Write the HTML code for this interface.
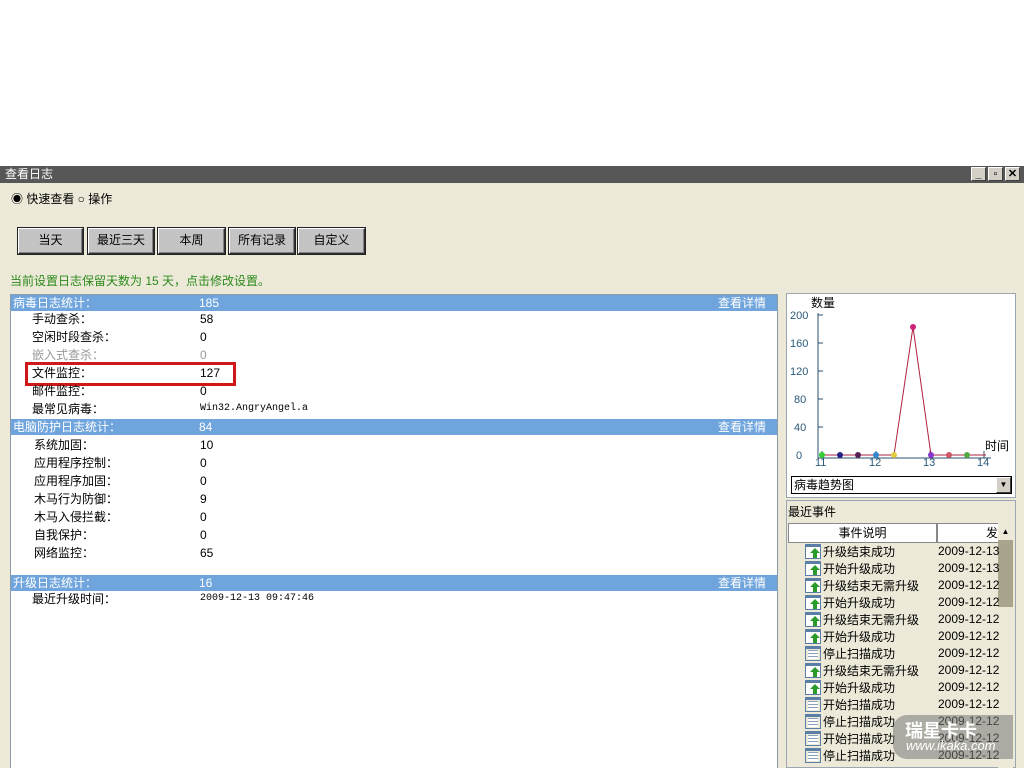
<!DOCTYPE html>
<html><head><meta charset="utf-8"><style>
*{margin:0;padding:0;box-sizing:border-box}
body{width:1024px;height:768px;overflow:hidden;background:#fff;font-family:"Liberation Sans","Noto Sans CJK SC",sans-serif;font-size:12px;position:relative;color:#000}
.a{position:absolute;white-space:nowrap}
.win{position:absolute;left:0;top:166px;width:1024px;height:602px;background:#ece9d8;overflow:hidden}
.title{position:absolute;left:0;top:0;width:1024px;height:17px;background:#575757;color:#fff;font-size:12px;line-height:17px;padding-left:5px}
.tb{position:absolute;top:1px;width:15px;height:14px;background:#d4d0c8;border:1px solid #fff;border-right-color:#404040;border-bottom-color:#404040;font-size:11px;font-weight:bold;line-height:12px;text-align:center;color:#000}
.btn{position:absolute;top:62px;height:26px;background:#c4c4c4;border:1px solid;border-color:#fff #303030 #303030 #fff;box-shadow:inset -1px -1px 0 #808080;text-align:center;line-height:23px;font-size:12px;outline:1px solid #222}
.panel{position:absolute;left:10px;top:128px;width:768px;height:480px;background:#fff;border:1px solid #8a9aaa}
.hd{position:absolute;left:0;width:766px;height:16px;background:#6fa5dc;color:#fff;line-height:16px}
.r{position:absolute;line-height:18px;top:0}
.m{font-family:"Liberation Mono",monospace;font-size:10px}
.rp{position:absolute;background:#fff;border:1px solid #9aa7b0}
.ev{position:absolute;left:823px;color:#000}
.dt{position:absolute;left:938px;font-size:12px}
.ic{position:absolute;left:805px;width:16px;height:15px;border:1px solid #5a7ea6;border-top-width:3px;background:#fff}
.ic.u::after{content:"";position:absolute;left:4px;top:1px;border:5px solid transparent;border-bottom:5px solid #2a9a2a;border-top:0}
.ic.u::before{content:"";position:absolute;left:7px;top:6px;width:4px;height:5px;background:#2a9a2a}
.ic.l{background:repeating-linear-gradient(#fff 0 1px,#8aa0bb 1px 2px,#fff 2px 3px);background-clip:content-box;padding:1px 2px}
</style></head><body>
<div class="win">
<div class="title">查看日志</div>
<div class="tb" style="left:971px">_</div><div class="tb" style="left:988px">▫</div><div class="tb" style="left:1005px">✕</div>
<div class="a" style="left:11px;top:24px">◉ 快速查看 ○ 操作</div>
<div class="btn" style="left:18px;width:65px">当天</div>
<div class="btn" style="left:88px;width:66px">最近三天</div>
<div class="btn" style="left:158px;width:67px">本周</div>
<div class="btn" style="left:229px;width:66px">所有记录</div>
<div class="btn" style="left:298px;width:67px">自定义</div>
<div class="a" style="left:10px;top:106px;color:#2a8a1a">当前设置日志保留天数为 15 天，点击修改设置。</div>
<div class="panel">
 <div class="hd" style="top:0"><span class="a" style="left:2px">病毒日志统计：</span><span class="a" style="left:188px">185</span><span class="a" style="left:707px">查看详情</span></div>
 <div class="r" style="left:21px;top:15px">手动查杀：</div><div class="r" style="left:189px;top:15px">58</div>
 <div class="r" style="left:21px;top:33px">空闲时段查杀：</div><div class="r" style="left:189px;top:33px">0</div>
 <div class="r" style="left:21px;top:51px;color:#999">嵌入式查杀：</div><div class="r" style="left:189px;top:51px;color:#999">0</div>
 <div class="r" style="left:21px;top:69px">文件监控：</div><div class="r" style="left:189px;top:69px">127</div>
 <div class="a" style="left:14px;top:67px;width:211px;height:24px;border:3px solid #d01818"></div>
 <div class="r" style="left:21px;top:87px">邮件监控：</div><div class="r" style="left:189px;top:87px">0</div>
 <div class="r" style="left:21px;top:105px">最常见病毒：</div><div class="r m" style="left:189px;top:105px">Win32.AngryAngel.a</div>
 <div class="hd" style="top:124px"><span class="a" style="left:2px">电脑防护日志统计：</span><span class="a" style="left:188px">84</span><span class="a" style="left:707px">查看详情</span></div>
 <div class="r" style="left:23px;top:141px">系统加固：</div><div class="r" style="left:189px;top:141px">10</div>
 <div class="r" style="left:23px;top:159px">应用程序控制：</div><div class="r" style="left:189px;top:159px">0</div>
 <div class="r" style="left:23px;top:177px">应用程序加固：</div><div class="r" style="left:189px;top:177px">0</div>
 <div class="r" style="left:23px;top:195px">木马行为防御：</div><div class="r" style="left:189px;top:195px">9</div>
 <div class="r" style="left:23px;top:213px">木马入侵拦截：</div><div class="r" style="left:189px;top:213px">0</div>
 <div class="r" style="left:23px;top:231px">自我保护：</div><div class="r" style="left:189px;top:231px">0</div>
 <div class="r" style="left:23px;top:249px">网络监控：</div><div class="r" style="left:189px;top:249px">65</div>
 <div class="hd" style="top:280px"><span class="a" style="left:2px">升级日志统计：</span><span class="a" style="left:188px">16</span><span class="a" style="left:707px">查看详情</span></div>
 <div class="r" style="left:21px;top:295px">最近升级时间：</div><div class="r m" style="left:189px;top:295px">2009-12-13 09:47:46</div>
</div>
</div>
<div class="rp" style="left:786px;top:293px;width:230px;height:205px"></div>
<svg class="a" style="left:786px;top:293px" width="230" height="180" font-family="Liberation Sans" font-size="11" fill="#2a5070">
<text x="25" y="14" font-family="Noto Sans CJK SC" font-size="12" fill="#000">数量</text>
<g fill="#2a5a7a"><text x="4" y="26">200</text><text x="4" y="54">160</text><text x="4" y="82">120</text><text x="8" y="110">80</text><text x="8" y="138">40</text><text x="10" y="166">0</text>
<text x="29" y="173">11</text><text x="83" y="173">12</text><text x="137" y="173">13</text><text x="191" y="173">14</text></g>
<text x="199" y="157" font-family="Noto Sans CJK SC" font-size="12" fill="#000">时间</text>
<path d="M32 20V165H205M32 22h5M32 50h5M32 78h5M32 106h5M32 134h5M36 158v7M90 158v7M144 158v7M198 158v7" stroke="#2a5070" fill="none"/>
<path d="M36 162H108L127 34L145 162H200" stroke="#b02040" fill="none"/>
<circle cx="36" cy="162" r="3" fill="#3c3"/><circle cx="54" cy="162" r="3" fill="#228"/><circle cx="72" cy="162" r="3" fill="#525"/><circle cx="90" cy="162" r="3" fill="#38c"/><circle cx="108" cy="162" r="3" fill="#dc4"/><circle cx="127" cy="34" r="3" fill="#c27"/><circle cx="145" cy="162" r="3" fill="#83c"/><circle cx="163" cy="162" r="3" fill="#c56"/><circle cx="181" cy="162" r="3" fill="#5a4"/>
</svg>
<div class="a" style="left:791px;top:476px;width:221px;height:18px;border:1px solid #000;background:#fff;line-height:16px;padding-left:2px">病毒趋势图</div>
<div class="a" style="left:996px;top:477px;width:15px;height:16px;background:#d4d0c8;border:1px solid #fff;border-right-color:#404040;border-bottom-color:#404040;font-size:8px;text-align:center;line-height:14px">▼</div>
<div class="a" style="left:786px;top:500px;width:230px;height:268px;border:1px solid #9aa7b0;background:#ece9d8"></div>
<div class="a" style="left:788px;top:503px">最近事件</div>
<div class="a" style="left:788px;top:523px;width:149px;height:20px;background:#fff;border:1px solid #888;text-align:center;line-height:18px">事件说明</div>
<div class="a" style="left:937px;top:523px;width:62px;height:20px;background:#fff;border:1px solid #888;text-align:right;line-height:18px;overflow:hidden">发</div>
<div class="a" style="left:998px;top:523px;width:15px;height:245px;background:#ece9d8"></div>
<div class="a" style="left:998px;top:523px;width:15px;height:17px;background:#ece9d8;font-size:8px;text-align:center;line-height:17px">▲</div>
<div class="a" style="left:998px;top:540px;width:15px;height:67px;background:#a8a58c"></div>
<div class="ic u" style="top:544px"></div><div class="a ev" style="top:543px">升级结束成功</div><div class="a dt" style="top:544px">2009-12-13</div>
<div class="ic u" style="top:561px"></div><div class="a ev" style="top:560px">开始升级成功</div><div class="a dt" style="top:561px">2009-12-13</div>
<div class="ic u" style="top:578px"></div><div class="a ev" style="top:577px">升级结束无需升级</div><div class="a dt" style="top:578px">2009-12-12</div>
<div class="ic u" style="top:595px"></div><div class="a ev" style="top:594px">开始升级成功</div><div class="a dt" style="top:595px">2009-12-12</div>
<div class="ic u" style="top:612px"></div><div class="a ev" style="top:611px">升级结束无需升级</div><div class="a dt" style="top:612px">2009-12-12</div>
<div class="ic u" style="top:629px"></div><div class="a ev" style="top:628px">开始升级成功</div><div class="a dt" style="top:629px">2009-12-12</div>
<div class="ic l" style="top:646px"></div><div class="a ev" style="top:645px">停止扫描成功</div><div class="a dt" style="top:646px">2009-12-12</div>
<div class="ic u" style="top:663px"></div><div class="a ev" style="top:662px">升级结束无需升级</div><div class="a dt" style="top:663px">2009-12-12</div>
<div class="ic u" style="top:680px"></div><div class="a ev" style="top:679px">开始升级成功</div><div class="a dt" style="top:680px">2009-12-12</div>
<div class="ic l" style="top:697px"></div><div class="a ev" style="top:696px">开始扫描成功</div><div class="a dt" style="top:697px">2009-12-12</div>
<div class="ic l" style="top:714px"></div><div class="a ev" style="top:713px">停止扫描成功</div><div class="a dt" style="top:714px">2009-12-12</div>
<div class="ic l" style="top:731px"></div><div class="a ev" style="top:730px">开始扫描成功</div><div class="a dt" style="top:731px">2009-12-12</div>
<div class="ic l" style="top:748px"></div><div class="a ev" style="top:747px">停止扫描成功</div><div class="a dt" style="top:748px">2009-12-12</div>
<div class="a" style="left:893px;top:715px;width:120px;height:44px;background:rgba(120,120,120,.55);border-radius:14px 0 0 14px"></div>
<div class="a" style="left:905px;top:717px;color:#fff;font-size:18px;font-weight:bold">瑞星卡卡</div>
<div class="a" style="left:906px;top:738px;color:#fff;font-size:13px;font-style:italic">www.ikaka.com</div>
</body></html>
